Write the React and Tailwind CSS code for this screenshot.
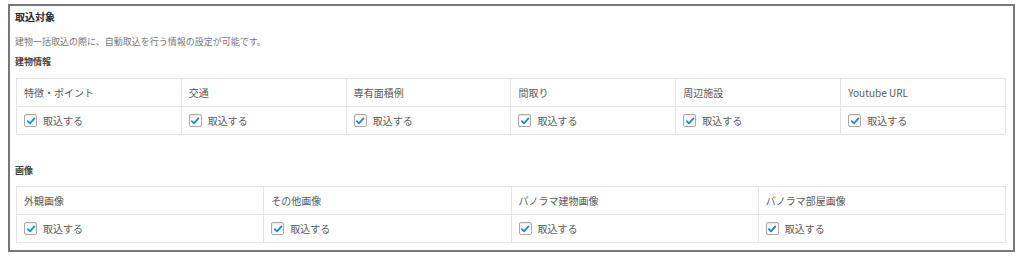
import React from 'react'

const buildingItems = ['特徴・ポイント', '交通', '専有面積例', '間取り', '周辺施設', 'Youtube URL']
const imageItems = ['外観画像', 'その他画像', 'パノラマ建物画像', 'パノラマ部屋画像']

function Check() {
    return (
        <span className="inline-flex items-center justify-center w-[13px] h-[13px] rounded-[2px] border border-[#a7aaad] bg-white shadow-[inset_0_1px_2px_rgba(0,0,0,0.1)]">
            <svg width="10" height="10" viewBox="0 0 10 10" fill="none">
                <path d="M1.8 5.2 L4 7.4 L8.4 2.4" stroke="#1e8cbe" strokeWidth="1.8" strokeLinecap="round" strokeLinejoin="round" />
            </svg>
        </span>
    )
}

function OptionTable({ items, cols }) {
    return (
        <div className={`grid ${cols} w-[990px] border-l border-t border-[#e2e4e7]`}>
            {items.map((item) => (
                <div key={item} className="h-[28px] flex items-center px-[7px] border-r border-b border-[#e2e4e7] text-[10px] text-[#5a5a5a]">
                    {item}
                </div>
            ))}
            {items.map((item) => (
                <label key={item + '-c'} className="h-[28px] flex items-center gap-[6px] px-[7px] border-r border-b border-[#e2e4e7] text-[10px] text-[#5a5a5a]">
                    <Check />
                    <span>取込する</span>
                </label>
            ))}
        </div>
    )
}

export default function App() {
    return (
        <div className="w-[1024px] h-[259px] bg-white pt-[4px] pl-[8px] font-['Noto_Sans_CJK_JP','Noto_Sans',sans-serif]">
            <div className="w-[1007px] h-[248px] border-2 border-[#777] pt-[4px] pl-[5px] pr-[7px]">
                {/* Header */}
                <h2 className="text-[10px] leading-[14px] font-bold text-[#23282d]">取込対象</h2>
                <p className="mt-[11px] text-[9px] leading-[14px] text-[#777]">
                    建物一括取込の際に、自動取込を行う情報の設定が可能です。
                </p>

                {/* 建物情報 */}
                <h3 className="mt-[6px] text-[9px] leading-[14px] font-bold text-[#444]">建物情報</h3>
                <div className="mt-[9px] ml-[1px]">
                    <OptionTable items={buildingItems} cols="grid-cols-6" />
                </div>

                {/* 画像 */}
                <h3 className="mt-[29px] text-[9px] leading-[14px] font-bold text-[#444]">画像</h3>
                <div className="mt-[8px] ml-[1px]">
                    <OptionTable items={imageItems} cols="grid-cols-4" />
                </div>
            </div>
        </div>
    )
}
